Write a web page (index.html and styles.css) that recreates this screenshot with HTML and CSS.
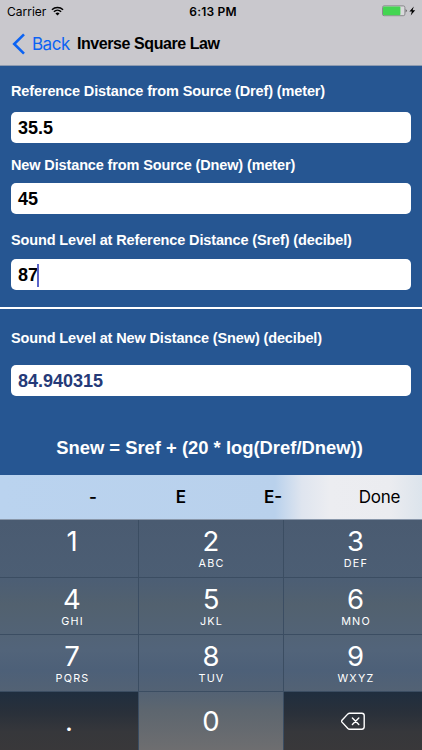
FILE: index.html
```html
<!DOCTYPE html>
<html lang="en">
<head>
    <meta charset="UTF-8">
    <meta name="viewport" content="width=device-width, initial-scale=1.0">
    <title>Inverse Square Law</title>
    <link rel="stylesheet" href="styles.css">
</head>
<body>
    <header>
        <div class="status-bar">
            <div class="carrier">
                <span>Carrier</span>
                <svg class="wifi" width="13" height="10" viewBox="0 0 14 10">
                    <path d="M1 3.6a8.6 8.6 0 0 1 12 0M3.1 5.9a5.6 5.6 0 0 1 7.8 0" fill="none" stroke="#000" stroke-width="1.6"/>
                    <path d="M4.8 7.6a3.2 3.2 0 0 1 4.4 0L7 9.8z"/>
                </svg>
            </div>
            <span class="time">6:13 PM</span>
            <svg class="battery" width="35" height="12" viewBox="0 0 35 12">
                <rect x="0.5" y="0.9" width="22.4" height="9.8" rx="1.6" fill="#d9d9dc" stroke="#77777b" stroke-width="0.8"/>
                <rect x="1" y="1.4" width="17.4" height="8.8" rx="1" fill="#43d551"/>
                <path d="M23.8 4q1.8 1.8 0 3.6z" fill="#222"/>
                <path d="M31.8 1.4l-4.4 5h2.5l-1.2 4 4.5-5.2h-2.6z"/>
            </svg>
        </div>
        <nav>
            <a class="back">
                <svg width="14" height="22" viewBox="0 0 14 22">
                    <path d="M12 1.3L2.2 11 12 20.7" fill="none" stroke="#0b63f3" stroke-width="2.6"/>
                </svg>
                <span>Back</span>
            </a>
            <h1>Inverse Square Law</h1>
        </nav>
    </header>

    <main>
        <!-- Input values -->
        <section class="inputs">
            <label>Reference Distance from Source (Dref) (meter)</label>
            <div class="field">35.5</div>
            <label class="label-dnew">New Distance from Source (Dnew) (meter)</label>
            <div class="field">45</div>
            <label class="label-sref">Sound Level at Reference Distance (Sref) (decibel)</label>
            <div class="field">87<span class="caret"></span></div>
        </section>

        <!-- Result -->
        <section class="result">
            <label class="label-snew">Sound Level at New Distance (Snew) (decibel)</label>
            <div class="field answer">84.940315</div>
            <p class="formula">Snew = Sref + (20 * log(Dref/Dnew))</p>
        </section>
    </main>

    <!-- Accessory bar above the keypad -->
    <div class="toolbar">
        <button></button>
        <button>-</button>
        <button>E</button>
        <button>E-</button>
        <button class="done">Done</button>
    </div>

    <div class="keypad">
        <button class="key"><b>1</b></button>
        <button class="key"><b>2</b><small>ABC</small></button>
        <button class="key"><b>3</b><small>DEF</small></button>
        <button class="key"><b>4</b><small>GHI</small></button>
        <button class="key"><b>5</b><small>JKL</small></button>
        <button class="key"><b>6</b><small>MNO</small></button>
        <button class="key"><b>7</b><small>PQRS</small></button>
        <button class="key"><b>8</b><small>TUV</small></button>
        <button class="key"><b>9</b><small>WXYZ</small></button>
        <button class="key dark"><b>.</b></button>
        <button class="key zero"><b>0</b></button>
        <button class="key dark">
            <svg width="25" height="19" viewBox="0 0 25 19">
                <path d="M8.6 1.2h12.2q2.4 0 2.4 2.4v11.2q0 2.4-2.4 2.4H8.6q-1 0-1.7-.7L1 10.1q-.7-.9 0-1.8l5.9-6.4q.7-.7 1.7-.7z" fill="none" stroke="#fff" stroke-width="1.4"/>
                <path d="M11.4 5.9l6.4 6.6M17.8 5.9l-6.4 6.6" stroke="#fff" stroke-width="1.4" stroke-linecap="round"/>
            </svg>
        </button>
    </div>
</body>
</html>
```

FILE: styles.css
```css
* {
    box-sizing: border-box;
}
body {
    font-family: "Liberation Sans", Arial, sans-serif;
    background-color: #265692;
    margin: 0;
    width: 422px;
    height: 750px;
    overflow: hidden;
    color: #000;
}
header {
    height: 66px;
    background-color: #c9c8cd;
    border-bottom: 1px solid #8d9bb0;
}
.status-bar {
    display: grid;
    grid-template-columns: 1fr auto 1fr;
    align-items: center;
    height: 22px;
    padding: 0 5px 0 7px;
    font-family: Inter, sans-serif;
    font-size: 12px;
}
.carrier {
    display: flex;
    align-items: center;
    gap: 5px;
}
.time {
    padding-left: 2px;
    font-weight: 600;
    letter-spacing: 0.2px;
}
.battery {
    justify-self: end;
}
nav {
    display: flex;
    align-items: center;
    height: 43px;
    padding-left: 12px;
}
.back {
    display: flex;
    align-items: center;
    gap: 6px;
    width: 65px;
    color: #0b63f3;
    font-family: Inter, sans-serif;
    font-size: 17px;
    letter-spacing: -0.5px;
}
h1 {
    margin: 0;
    font-size: 16px;
    letter-spacing: -0.43px;
}
main {
    height: 409px;
}
.inputs {
    height: 243px;
    padding: 15px 11px 0;
    border-bottom: 2px solid #fff;
}
.result {
    padding: 19px 11px 0;
}
label {
    display: block;
    height: 20px;
    line-height: 20px;
    margin-bottom: 11px;
    color: #fff;
    font-size: 14.5px;
    font-weight: bold;
    letter-spacing: -0.13px;
    white-space: nowrap;
}
.field {
    display: flex;
    align-items: center;
    height: 31px;
    padding: 1px 7px 0;
    border-radius: 5px;
    background-color: #fff;
    font-size: 18px;
    font-weight: bold;
}
.label-dnew {
    margin-top: 12px;
    margin-bottom: 8px;
}
.label-sref {
    margin-top: 16px;
    margin-bottom: 9px;
}
.label-snew {
    margin-bottom: 17px;
}
.caret {
    width: 2px;
    height: 23px;
    margin-left: -1px;
    background-color: #5964c8;
}
.answer {
    color: #253a78;
}
.formula {
    margin: 41px 0 0;
    color: #fff;
    font-size: 18.4px;
    font-weight: bold;
    line-height: 22px;
    text-align: center;
    padding-right: 3px;
}
.toolbar {
    display: grid;
    grid-template-columns: 49px 88px 88px 96px 1fr;
    height: 45px;
    background: linear-gradient(90deg, #bad3ef 0, #b9d1ec 275px, #dfe5ef 302px, #ecedf1 330px, #ebecf0 390px, #dce4ec 422px);
    border-bottom: 1px solid #8997aa;
}
button {
    padding: 0;
    border: 0;
    background: none;
    color: #000;
    font-family: Inter, sans-serif;
    font-size: 17px;
    font-weight: 600;
}
.toolbar .done {
    padding-right: 22px;
    font-weight: 400;
    letter-spacing: -0.3px;
    text-align: right;
}
.keypad {
    display: grid;
    grid-template-columns: 139px 145px 138px;
    grid-template-rows: 58px 57px 57px 58px;
    height: 230px;
    background: linear-gradient(#4a5b71 0, #4c5e74 60px, #52616f 85px, #52647a 130px, #4d6078 150px, #536274 172px, #5d666f 190px, #6e6e70 230px);
}
.key {
    display: flex;
    flex-direction: column;
    align-items: center;
    padding-top: 5px;
    border-right: 1px solid #3b4d62;
    border-bottom: 1px solid #3b4d62;
    color: #fff;
}
.key:nth-child(3n+1) {
    padding-left: 6px;
}
.key:nth-child(3n) {
    padding-left: 5px;
    border-right: 0;
}
.key b {
    font-size: 27.5px;
    font-weight: 400;
    line-height: 32px;
}
.key small {
    margin-left: 1px;
    font-size: 10.8px;
    font-weight: 400;
    letter-spacing: 1.2px;
    line-height: 13px;
}
.key.dark,
.key.zero {
    justify-content: center;
    padding: 0;
    border-bottom: 0;
}
.key.dark {
    background: linear-gradient(#1f2e3f 0, #29303a 20px, #36373b 40px, #39383a 58px);
}
```
